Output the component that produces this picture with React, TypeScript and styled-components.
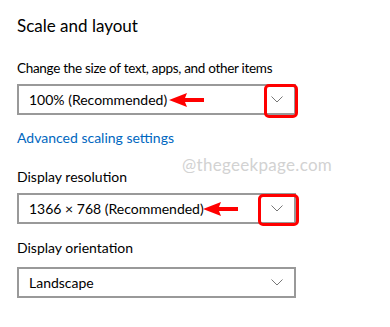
import styled, { createGlobalStyle } from 'styled-components';

const GlobalStyle = createGlobalStyle`
  html, body {
    margin: 0;
    padding: 0;
    background: #ffffff;
  }
  body {
    font-family: 'Lato', 'Noto Sans', sans-serif;
    color: #000;
  }
`;

const Page = styled.div`
  position: relative;
  width: 390px;
  height: 327px;
  padding: 0 0 0 17px;
  box-sizing: border-box;
  display: flex;
  flex-direction: column;
  overflow: hidden;
`;

const Title = styled.h1`
  margin: 14px 0 0;
  font-size: 17px;
  font-weight: 400;
  line-height: 24px;
`;

const Label = styled.div<{ $top: number; $tight?: boolean }>`
  margin-top: ${(p) => p.$top}px;
  font-size: ${(p) => (p.$tight ? '13.5px' : '14px')};
  letter-spacing: ${(p) => (p.$tight ? '-0.3px' : '0')};
  line-height: 20px;
`;

const Link = styled.a`
  margin-top: 13px;
  font-size: 14px;
  line-height: 20px;
  color: #0067c0;
  text-decoration: none;
`;

const Select = styled.div<{ $top: number }>`
  position: relative;
  margin-top: ${(p) => p.$top}px;
  width: 279px;
  height: 31px;
  box-sizing: border-box;
  border: 2px solid #999999;
  display: flex;
  align-items: center;
  justify-content: space-between;
  padding: 0 10px 0 10px;
  font-size: 14px;
`;

const Chevron = styled.svg`
  width: 12px;
  height: 7px;
  margin-right: 1px;
`;

const Highlight = styled.div<{ $left: number; $top: number; $w: number; $h: number }>`
  position: absolute;
  left: ${(p) => p.$left}px;
  top: ${(p) => p.$top}px;
  width: ${(p) => p.$w}px;
  height: ${(p) => p.$h}px;
  box-sizing: border-box;
  border: 3px solid #ff0000;
  border-radius: 5px;
`;

const Arrow = styled.svg<{ $left: number }>`
  position: absolute;
  left: ${(p) => p.$left}px;
  top: 50%;
  margin-top: -7px;
  width: 35px;
  height: 14px;
`;

const Watermark = styled.div`
  position: absolute;
  left: 182px;
  top: 154px;
  font-size: 17px;
  color: #d2d2d2;
  letter-spacing: 0.3px;
`;

const ChevronIcon = () => (
  <Chevron viewBox="0 0 12 7">
    <path d="M0.5 0.5 L6 6 L11.5 0.5" fill="none" stroke="#777" strokeWidth="1" />
  </Chevron>
);

const RedArrow = ({ left }: { left: number }) => (
  <Arrow $left={left} viewBox="0 0 35 14">
    <polygon points="0,7 18,0 16,5 35,5 35,9 16,9 18,14" fill="#ff0000" />
  </Arrow>
);

export default function App() {
  return (
    <>
      <GlobalStyle />
      <Page>
        <Title>Scale and layout</Title>

        <Label $top={20} $tight>
          Change the size of text, apps, and other items
        </Label>
        <Select $top={6}>
          <span>100% (Recommended)</span>
          <ChevronIcon />
          <RedArrow left={150} />
          <Highlight $left={245} $top={-2} $w={34} $h={34} />
        </Select>

        <Link href="#">Advanced scaling settings</Link>

        <Label $top={19}>Display resolution</Label>
        <Select $top={6}>
          <span>1366 × 768 (Recommended)</span>
          <ChevronIcon />
          <RedArrow left={184} />
          <Highlight $left={239} $top={-1} $w={41} $h={32} />
        </Select>

        <Label $top={14}>Display orientation</Label>
        <Select $top={9}>
          <span>Landscape</span>
          <ChevronIcon />
        </Select>

        <Watermark>@thegeekpage.com</Watermark>
      </Page>
    </>
  );
}
